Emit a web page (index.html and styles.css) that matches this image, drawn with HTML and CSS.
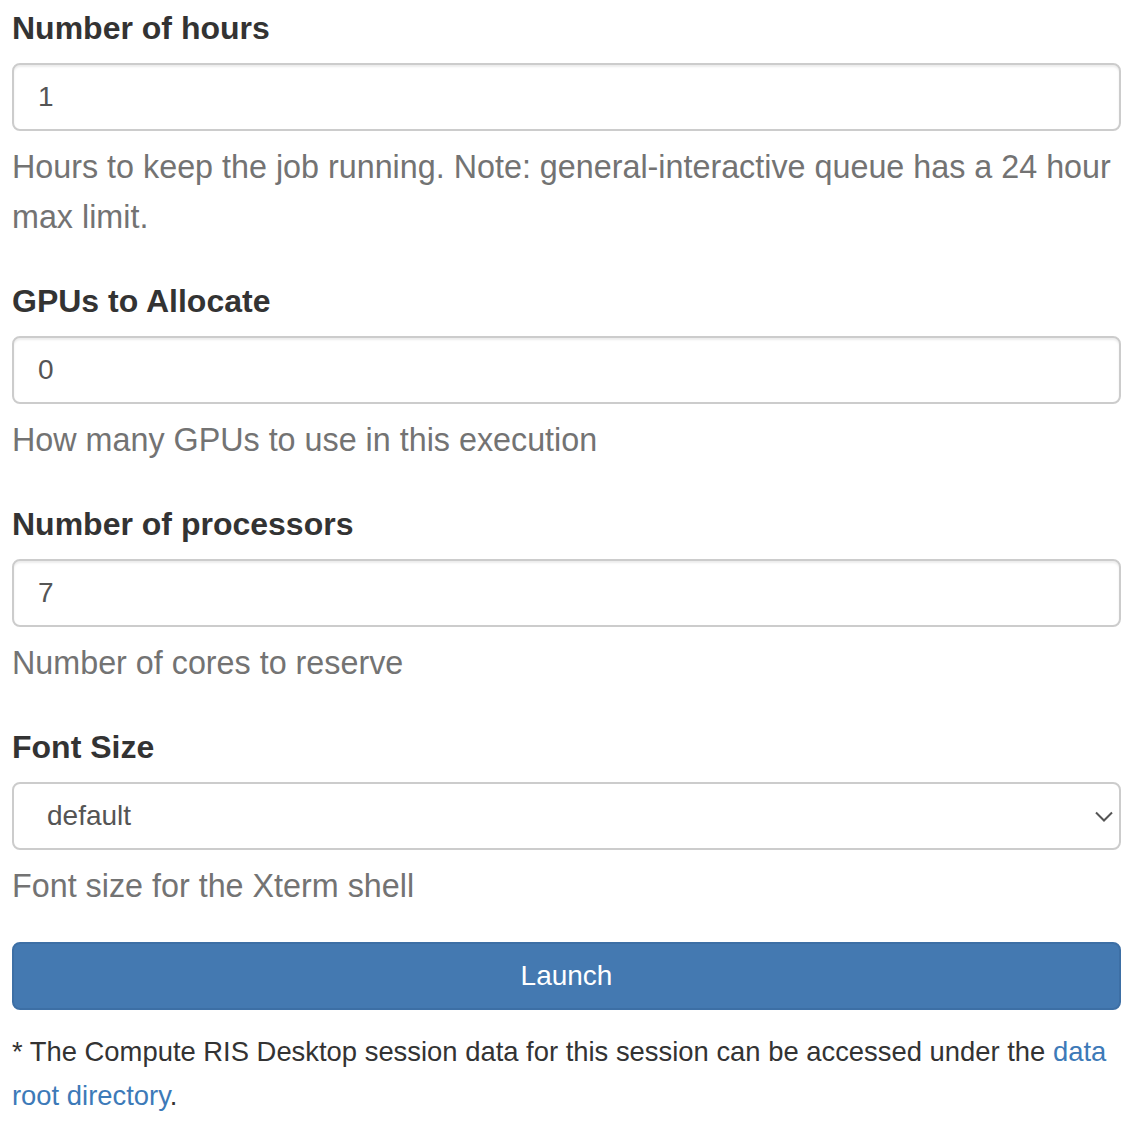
FILE: index.html
```html
<!DOCTYPE html>
<html lang="en">
<head>
<meta charset="utf-8">
<title>Session form</title>
<link rel="stylesheet" href="styles.css">
</head>
<body>
<form class="form">
  <div class="form-group">
    <label class="label">Number of hours</label>
    <div class="control">1</div>
    <p class="help">Hours to keep the job running. Note: general-interactive queue has a 24 hour max limit.</p>
  </div>
  <div class="form-group">
    <label class="label">GPUs to Allocate</label>
    <div class="control">0</div>
    <p class="help">How many GPUs to use in this execution</p>
  </div>
  <div class="form-group">
    <label class="label">Number of processors</label>
    <div class="control">7</div>
    <p class="help">Number of cores to reserve</p>
  </div>
  <div class="form-group">
    <label class="label">Font Size</label>
    <div class="select-wrap">
      <div class="control select">default</div>
      <svg class="chevron" width="18" height="11" viewBox="0 0 18 11"><path d="M1 1.5 L9 9.5 L17 1.5" fill="none" stroke="#555" stroke-width="2"/></svg>
    </div>
    <p class="help">Font size for the Xterm shell</p>
  </div>
  <div class="btn">Launch</div>
  <p class="footer">* The Compute RIS Desktop session data for this session can be accessed under the <a class="link" href="#">data root directory</a>.</p>
</form>
</body>
</html>
```

FILE: styles.css
```css
html, body {
  margin: 0;
  padding: 0;
  background: #fff;
}
body {
  font-family: "Liberation Sans", Arial, sans-serif;
  color: #333;
}
.form {
  width: 1109px;
  padding: 8px 0 0 12px;
}
.form-group {
  display: flex;
  flex-direction: column;
}
.label {
  display: block;
  font-weight: bold;
  font-size: 32px;
  line-height: 40px;
  margin-bottom: 15px;
  color: #333;
}
.control {
  box-sizing: border-box;
  height: 68px;
  border: 2px solid #ccc;
  border-radius: 8px;
  padding: 0 24px;
  font-size: 28px;
  line-height: 64px;
  color: #555;
  background: #fff;
  box-shadow: inset 0 2px 2px rgba(0,0,0,0.075);
}
.select-wrap {
  position: relative;
}
.select {
  padding-left: 33px;
  box-shadow: none;
}
.chevron {
  position: absolute;
  right: 8px;
  top: 29px;
}
.help {
  margin: 11px 0 39px;
  font-size: 32.3px;
  line-height: 50px;
  color: #737373;
}
.btn {
  box-sizing: border-box;
  height: 68px;
  margin-top: -8px;
  border: 2px solid #3d6fa5;
  border-radius: 8px;
  background: #4479b1;
  color: #fff;
  font-size: 28px;
  line-height: 64px;
  text-align: center;
}
.footer {
  margin: 20px 0 0;
  font-size: 27.4px;
  line-height: 44px;
  color: #333;
}
.link {
  color: #3d7ab8;
  text-decoration: none;
}
```
